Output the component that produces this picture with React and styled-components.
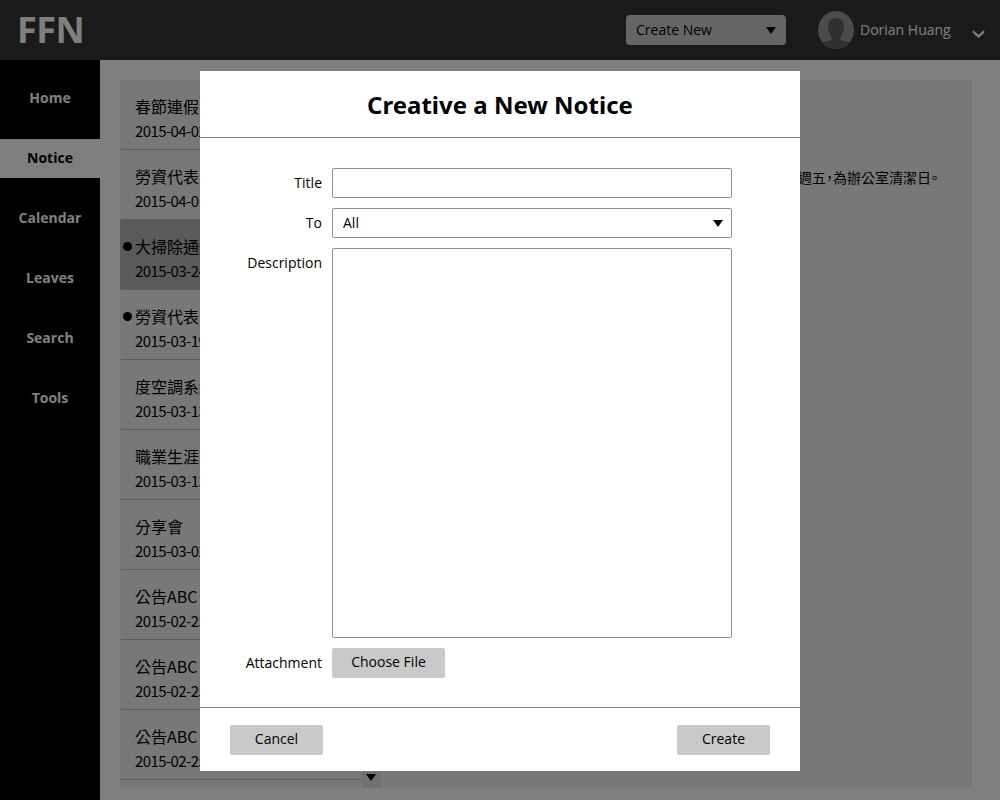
import React from "react";
import styled, { createGlobalStyle } from "styled-components";

const Global = createGlobalStyle`
  * { box-sizing: border-box; }
  body { margin: 0; overflow: hidden; color: #000; font: 14px/20px "Open Sans", "Noto Sans CJK TC", sans-serif; }
  button, input, textarea { font: inherit; color: inherit; }
`;

const Page = styled.div`
  display: grid;
  grid-template: 60px 740px / 100px 900px;
  width: 1000px;
  height: 800px;
  background: #fff;
`;

const Header = styled.header`
  grid-column: 1 / 3;
  display: flex;
  align-items: center;
  padding: 0 15px 0 17px;
  background: #343434;
`;

const Logo = styled.div`
  font: 700 36px/60px "Open Sans", sans-serif;
  letter-spacing: -0.5px;
  color: #fff;
  margin-right: auto;
`;

const CreateMenu = styled.button`
  display: flex;
  align-items: center;
  justify-content: space-between;
  width: 160px;
  height: 30px;
  padding: 0 10px;
  border: 0;
  border-radius: 4px;
  background: #cacaca;
`;

const Avatar = styled.svg`
  display: block;
  margin: 0 6px 0 32px;
`;

const UserName = styled.span`
  width: 112px;
  color: #fff;
`;

const Chevron = styled.svg`
  display: block;
  margin-top: 8px;
`;

const Sidebar = styled.nav`
  display: flex;
  flex-direction: column;
  gap: 21px;
  padding-top: 19px;
  background: #000;
`;

const NavItem = styled.a`
  height: 39px;
  font: 700 14px/38px "Open Sans", sans-serif;
  text-align: center;
  color: ${(p) => (p.$active ? "#000" : "#fff")};
  background: ${(p) => (p.$active ? "#fff" : "transparent")};
`;

const Main = styled.main`
  display: flex;
  height: 708px;
  margin: 20px 28px 0 20px;
  background: #f0f0f0;
`;

const NoticeList = styled.ul`
  width: 242px;
  margin: 0;
  padding: 0;
  list-style: none;
`;

const Notice = styled.li`
  display: grid;
  grid-template-columns: 15px 1fr;
  align-content: start;
  height: 70px;
  padding-top: 14px;
  font-family: "Noto Sans CJK TC", sans-serif;
  background:
    linear-gradient(#bcbcbc, #bcbcbc) 1px 100% / 240px 1px no-repeat,
    linear-gradient(#b4b4b4, #b4b4b4) 0 0 / ${(p) => (p.$selected ? "100%" : "0")} 69px no-repeat;
`;

const Dot = styled.i`
  align-self: center;
  width: 9px;
  height: 9px;
  margin-left: 3px;
  border-radius: 50%;
  background: ${(p) => (p.$on ? "#000" : "transparent")};
`;

const NoticeTitle = styled.span`
  font-size: 16px;
  line-height: 25px;
`;

const NoticeDate = styled.time`
  grid-column: 2;
  font-size: 15px;
  line-height: 23px;
  letter-spacing: -0.58px;
`;

const Scrollbar = styled.div`
  display: flex;
  align-items: flex-end;
  justify-content: center;
  width: 19px;
  padding: 0 1px 7px 0;
  background: #e2e2e2;
`;

const Detail = styled.article`
  flex: 1;
  padding: 87px 34px 0 0;
  text-align: right;
  font-family: "Noto Sans CJK TC", sans-serif;
  font-feature-settings: "halt";
`;

const Backdrop = styled.div`
  position: fixed;
  inset: 0;
  background: rgba(0, 0, 0, 0.5);
`;

const Dialog = styled.section`
  position: absolute;
  left: 200px;
  top: 71px;
  display: flex;
  flex-direction: column;
  width: 600px;
  height: 700px;
  background: #fff;
`;

const DialogTitle = styled.h1`
  height: 67px;
  margin: 0;
  border-bottom: 1px solid #808080;
  font-family: "Noto Sans", sans-serif;
  font-size: 24px;
  line-height: 68px;
  text-align: center;
`;

const Form = styled.form`
  display: grid;
  grid-template: 30px 30px 390px 30px / 92px 400px;
  gap: 10px;
  flex: 1;
  padding: 30px 30px 0;
`;

const Label = styled.label`
  line-height: 30px;
  text-align: right;
`;

const Field = styled.div`
  display: flex;
  align-items: center;
  justify-content: space-between;
  padding: 0 8px 0 10px;
  border: 1px solid #909090;
  border-radius: 2px;
`;

const Button = styled.button`
  width: ${(p) => p.$width}px;
  height: 30px;
  padding: 0 0 2px;
  border: 0;
  border-radius: 2px;
  background: #c9c9c9;
`;

const Footer = styled.footer`
  display: flex;
  justify-content: space-between;
  height: 64px;
  padding: 17px 30px;
  border-top: 1px solid #808080;
`;

const Arrow = () => (
  <svg width="10" height="7" viewBox="0 0 10 7">
    <path d="M0 0h10L5 7z" />
  </svg>
);

const nav = ["Home", "Notice", "Calendar", "Leaves", "Search", "Tools"];
const notices = [
  ["春節連假", "2015-04-02"],
  ["勞資代表", "2015-04-01"],
  ["大掃除通知", "2015-03-24", true, true],
  ["勞資代表", "2015-03-19", true],
  ["度空調系統", "2015-03-13"],
  ["職業生涯講", "2015-03-13"],
  ["分享會", "2015-03-02"],
  ["公告ABC", "2015-02-25"],
  ["公告ABC", "2015-02-25"],
  ["公告ABC", "2015-02-25"],
];

export default function App() {
  return (
    <>
      <Global />
      <Page>
        <Header>
          <Logo>FFN</Logo>
          <CreateMenu>Create New<Arrow /></CreateMenu>
          <Avatar width="36" height="38" viewBox="0 0 36 38">
            <defs>
              <clipPath id="face"><ellipse cx="18" cy="19" rx="18" ry="19" /></clipPath>
            </defs>
            <g clipPath="url(#face)">
              <path fill="#969696" d="M0 0h36v38H0z" />
              <path fill="#606060" d="M18 7c5 0 8 3.500 8 9 0 5-1.500 8-3.500 10v2.500c1.500 1.500 5 2 10.500 3V38H3v-6.500c5.500-1 9-1.500 10.500-3V26C11.500 24 10 21 10 16c0-5.500 3-9 8-9z" />
            </g>
          </Avatar>
          <UserName>Dorian Huang</UserName>
          <Chevron width="13" height="8" viewBox="0 0 13 8">
            <path d="M.8 0v2.800L6.500 8l5.700-5.200V0L6.500 4.800z" fill="#fff" />
          </Chevron>
        </Header>
        <Sidebar>
          {nav.map((n) => <NavItem key={n} $active={n === "Notice"}>{n}</NavItem>)}
        </Sidebar>
        <Main>
          <NoticeList>
            {notices.map(([title, date, unread, selected], i) => (
              <Notice key={i} $selected={selected}>
                <Dot $on={unread} />
                <NoticeTitle>{title}</NoticeTitle>
                <NoticeDate>{date}</NoticeDate>
              </Notice>
            ))}
          </NoticeList>
          <Scrollbar><Arrow /></Scrollbar>
          <Detail>週五，為辦公室清潔日。</Detail>
        </Main>
      </Page>
      <Backdrop />
      <Dialog>
        <DialogTitle>Creative a New Notice</DialogTitle>
        <Form>
          <Label>Title</Label>
          <Field />
          <Label>To</Label>
          <Field>All<Arrow /></Field>
          <Label>Description</Label>
          <Field />
          <Label>Attachment</Label>
          <Button type="button" $width={113}>Choose File</Button>
        </Form>
        <Footer>
          <Button $width={93}>Cancel</Button>
          <Button $width={93}>Create</Button>
        </Footer>
      </Dialog>
    </>
  );
}
